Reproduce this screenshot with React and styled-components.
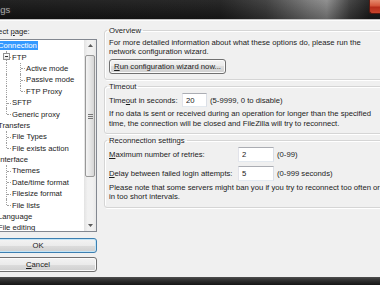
import styled, { createGlobalStyle } from "styled-components";

const GlobalStyle = createGlobalStyle`
  html, body {
    margin: 0;
    padding: 0;
    background: #0d0d0d;
  }
  body {
    font-family: "Liberation Sans", Arial, sans-serif;
  }
`;

const pages = [
    { label: "Connection", guides: [], selected: true },
    { label: "FTP", guides: ["tee"], open: true },
    { label: "Active mode", guides: ["pass", "tee"] },
    { label: "Passive mode", guides: ["pass", "tee"] },
    { label: "FTP Proxy", guides: ["pass", "end"] },
    { label: "SFTP", guides: ["tee"] },
    { label: "Generic proxy", guides: ["end"] },
    { label: "Transfers", guides: [] },
    { label: "File Types", guides: ["tee"] },
    { label: "File exists action", guides: ["end"] },
    { label: "Interface", guides: [] },
    { label: "Themes", guides: ["tee"] },
    { label: "Date/time format", guides: ["tee"] },
    { label: "Filesize format", guides: ["tee"] },
    { label: "File lists", guides: ["end"] },
    { label: "Language", guides: [] },
    { label: "File editing", guides: [] },
];

const Arrow = ({ up }) => (
    <svg width="5" height="3" viewBox="0 0 5 3">
        <path d={up ? "M0 3 L2.5 0 L5 3 Z" : "M0 0 L2.5 3 L5 0 Z"} fill="#5c5c5c" />
    </svg>
);

const App = () => {
    return <>
        <GlobalStyle />
        <Screen>
            <TitleBar>
                <Title>Settings</Title>
                <CloseButton />
            </TitleBar>
            <Body>
                <PagePane>
                    <PaneLabel>Select <Key>p</Key>age:</PaneLabel>
                    <Tree>
                        <TreeList>
                            {pages.map(page => (
                                <TreeRow key={page.label}>
                                    <RootGutter />
                                    {page.guides.map((kind, i) => (
                                        <Guide key={i} $kind={kind}>
                                            {page.open && i === page.guides.length - 1 && <Expander />}
                                        </Guide>
                                    ))}
                                    <TreeText $selected={page.selected}>{page.label}</TreeText>
                                </TreeRow>
                            ))}
                        </TreeList>
                        <ScrollBar>
                            <ScrollArrow><Arrow up /></ScrollArrow>
                            <ScrollTrack>
                                <Thumb><Grip /></Thumb>
                            </ScrollTrack>
                            <ScrollArrow><Arrow /></ScrollArrow>
                        </ScrollBar>
                    </Tree>
                    <PushButton $default $top={6}>OK</PushButton>
                    <PushButton $top={4}><Key>C</Key>ancel</PushButton>
                </PagePane>
                <SettingsPane>
                    <Group>
                        <Caption>Overview</Caption>
                        <Note $top={2.5}>
                            For more detailed information about what these options do, please run the<br />
                            network configuration wizard.
                        </Note>
                        <PushButton $width={117} $top={2.5}><Key>R</Key>un configuration wizard now...</PushButton>
                    </Group>
                    <Group>
                        <Caption>Timeout</Caption>
                        <FieldRow $top={2}>
                            <FieldLabel $width={73}>Time<Key>o</Key>ut in seconds:</FieldLabel>
                            <NumberBox $width={25} $height={14} defaultValue="20" />
                            <Hint>(5-9999, 0 to disable)</Hint>
                        </FieldRow>
                        <Note $top={2}>
                            If no data is sent or received during an operation for longer than the specified<br />
                            time, the connection will be closed and FileZilla will try to reconnect.
                        </Note>
                    </Group>
                    <Group>
                        <Caption>Reconnection settings</Caption>
                        <FieldRow $top={1.5}>
                            <FieldLabel $width={129}><Key>M</Key>aximum number of retries:</FieldLabel>
                            <NumberBox $width={36} $height={15} defaultValue="2" />
                            <Hint>(0-99)</Hint>
                        </FieldRow>
                        <FieldRow $top={4}>
                            <FieldLabel $width={129}><Key>D</Key>elay between failed login attempts:</FieldLabel>
                            <NumberBox $width={36} $height={15} defaultValue="5" />
                            <Hint>(0-999 seconds)</Hint>
                        </FieldRow>
                        <Note $top={2}>
                            Please note that some servers might ban you if you try to reconnect too often or<br />
                            in too short intervals.
                        </Note>
                    </Group>
                </SettingsPane>
            </Body>
            <BottomFrame />
        </Screen>
    </>;
}

export default App;

const Screen = styled.div`
    width: 380px;
    height: 285px;
    overflow: hidden;
    display: flex;
    flex-direction: column;
    background: #0d0d0d;
    font-size: 7.7px;
    color: #1b1b1b;
`

const TitleBar = styled.div`
    flex: none;
    height: 19px;
    display: flex;
    align-items: flex-start;
    justify-content: space-between;
    background:
        linear-gradient(to bottom, rgba(255, 255, 255, 0.06), rgba(0, 0, 0, 0.25)),
        linear-gradient(to right, #151515 0%, #1c1c1c 58%, #3a3a3a 70%, #7a7a7a 82%, #8a8a8a 86%, #3c3c3c 92%, #1d1d1d 97%);
`

const Title = styled.span`
    margin: 4px 0 0 -24px;
    font-size: 9.5px;
    line-height: 11px;
    color: #a9a9a9;
    text-shadow: 0 0 4px rgba(255, 255, 255, 0.15);
`

const CloseButton = styled.span`
    width: 10px;
    height: 13px;
    border-left: 1px solid #5a1a12;
    border-bottom: 1px solid #5a1a12;
    border-bottom-left-radius: 3px;
    background: linear-gradient(to bottom, #e58a6e 0%, #d4553a 45%, #b62c1a 55%, #c9452c 100%);
`

const Body = styled.div`
    flex: 1;
    display: flex;
    gap: 7px;
    margin-left: -21px;
    background: #f0f0f0;
    border-top: 1px solid #c4c4c4;
    box-shadow: inset 0 1px 0 #fbfbfb;
`

const PagePane = styled.div`
    flex: none;
    width: 118px;
    display: flex;
    flex-direction: column;
    padding-top: 7px;
`

const PaneLabel = styled.div`
    margin-left: 8px;
    line-height: 10px;
    white-space: nowrap;
`

const Key = styled.span`
    text-decoration: underline;
`

const Tree = styled.div`
    height: 193px;
    margin-top: 2px;
    box-sizing: border-box;
    display: flex;
    border: 1px solid #828790;
    background: #fff;
`

const TreeList = styled.div`
    flex: 1;
    overflow: hidden;
`

const TreeRow = styled.div`
    height: 11.4px;
    display: flex;
    align-items: center;
`

const RootGutter = styled.span`
    flex: none;
    width: 17px;
`

const Guide = styled.span`
    position: relative;
    flex: none;
    width: 14px;
    align-self: stretch;
    &::before {
        content: "";
        position: absolute;
        left: 9px;
        top: 0;
        bottom: ${p => (p.$kind === "end" ? "50%" : "0")};
        border-left: 1px dotted #a0a0a0;
    }
    &::after {
        content: ${p => (p.$kind === "pass" ? "none" : '""')};
        position: absolute;
        left: 10px;
        width: 4px;
        top: 50%;
        border-top: 1px dotted #a0a0a0;
    }
`

const Expander = styled.span`
    position: absolute;
    z-index: 1;
    left: 6px;
    top: 2px;
    width: 7px;
    height: 7px;
    box-sizing: border-box;
    border: 1px solid #919191;
    background: linear-gradient(#ffffff, #e4e4e4);
    &::before {
        content: "";
        position: absolute;
        left: 1px;
        right: 1px;
        top: 2px;
        border-top: 1px solid #333;
    }
`

const TreeText = styled.span`
    padding: 0 1px;
    line-height: 9px;
    white-space: nowrap;
    color: ${p => (p.$selected ? "#fff" : "#1b1b1b")};
    background: ${p => (p.$selected ? "#3399ff" : "transparent")};
`

const ScrollBar = styled.div`
    flex: none;
    width: 12px;
    display: flex;
    flex-direction: column;
    background: linear-gradient(to right, #e3e3e3, #f1f1f1 30%, #f1f1f1 70%, #e8e8e8);
`

const ScrollArrow = styled.div`
    flex: none;
    height: 11px;
    display: flex;
    align-items: center;
    justify-content: center;
`

const ScrollTrack = styled.div`
    flex: 1;
    padding: 4px 1px 0;
`

const Thumb = styled.div`
    height: 122px;
    box-sizing: border-box;
    display: flex;
    align-items: center;
    justify-content: center;
    border: 1px solid #989898;
    border-radius: 2px;
    background: linear-gradient(to right, #f4f4f4, #e6e6e6 50%, #d6d6d6);
`

const Grip = styled.span`
    width: 5px;
    height: 5px;
    background: repeating-linear-gradient(to bottom, #777 0 1px, transparent 1px 2px);
`

const PushButton = styled.button`
    flex: none;
    width: ${p => (p.$width ? `${p.$width}px` : "auto")};
    height: 15px;
    margin: ${p => p.$top || 0}px 0 0;
    padding: 0;
    display: flex;
    align-items: center;
    justify-content: center;
    box-sizing: border-box;
    font-family: "Liberation Sans", Arial, sans-serif;
    font-size: 7.7px;
    color: #1b1b1b;
    white-space: nowrap;
    border: 1px solid ${p => (p.$default ? "#3c7fb1" : "#707070")};
    border-radius: 3px;
    background: linear-gradient(#f3f3f3, #ebebeb 50%, #dddddd 50%, #cfcfcf);
    box-shadow: inset 0 0 0 1px ${p => (p.$default ? "#c4e5f6" : "#fbfbfb")};
`

const SettingsPane = styled.div`
    flex: none;
    width: 300px;
    padding-top: 6px;
    display: flex;
    flex-direction: column;
`

const Group = styled.fieldset`
    margin: 0 0 2px;
    padding: 0 5px 5px 4px;
    min-width: 0;
    border: 1px solid #d5d5d5;
    border-radius: 3px;
    box-shadow: inset 1px 1px 0 #fff, 1px 1px 0 #fff;
`

const Caption = styled.legend`
    margin-left: -2px;
    padding: 0 2px;
    line-height: 9px;
    white-space: nowrap;
`

const Note = styled.p`
    margin: ${p => p.$top || 0}px 0 0;
    line-height: 9.5px;
    white-space: nowrap;
`

const FieldRow = styled.div`
    margin-top: ${p => p.$top || 0}px;
    display: flex;
    align-items: center;
    white-space: nowrap;
`

const FieldLabel = styled.label`
    flex: none;
    width: ${p => p.$width}px;
`

const NumberBox = styled.input`
    flex: none;
    width: ${p => p.$width}px;
    height: ${p => p.$height}px;
    margin: 0;
    padding: 0 0 0 3px;
    box-sizing: border-box;
    font-family: "Liberation Sans", Arial, sans-serif;
    font-size: 7.7px;
    color: #1b1b1b;
    background: #fff;
    border: 1px solid;
    border-color: #abadb3 #dbdfe6 #e3e9ef #e2e3ea;
    outline: none;
`

const Hint = styled.span`
    margin-left: 3px;
`

const BottomFrame = styled.div`
    flex: none;
    height: 8px;
    background: linear-gradient(#505050 0, #3a3a3a 2px, #262626 5px, #161616 8px);
`
